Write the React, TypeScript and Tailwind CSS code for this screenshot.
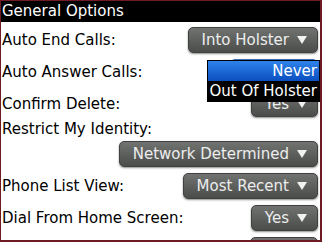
import React from 'react'

function Arrow() {
  return (
    <svg width="10" height="8" viewBox="0 0 10 8" className="shrink-0">
      <polygon points="0,0 10,0 5,8" fill="#f2f2f2" />
    </svg>
  )
}

function Picker({ label, focused = false }: { label: string; focused?: boolean }) {
  const tone = focused
    ? 'from-[#8cbcf0] to-[#2a6cd0] border-[#3a6fb8]'
    : 'from-[#717371] to-[#4b4d4b] border-[#3f413f]'
  return (
    <div
      className={`flex items-center gap-[8px] h-[26px] rounded-[5px] border bg-gradient-to-b ${tone} pl-[13px] pr-[10px] text-[#ededed] shadow-[0_1px_2px_rgba(0,0,0,0.45)] whitespace-nowrap`}
    >
      <span className="leading-none">{label}</span>
      <Arrow />
    </div>
  )
}

function Row({ label, value, focused }: { label?: string; value: string; focused?: boolean }) {
  return (
    <div className="flex items-center justify-between h-[32px] pl-[1px] pr-[2px]">
      <span className="whitespace-nowrap">{label}</span>
      <Picker label={value} focused={focused} />
    </div>
  )
}

export default function App() {
  return (
    <div className="relative w-[322px] h-[242px] overflow-hidden bg-white border-[#6e1b23] border-l border-t border-r-2 border-b-2 font-['DejaVu_Sans',sans-serif] text-[15px] text-black">
      <div className="h-[21px] bg-black text-white pl-[1px] leading-[21px]">General Options</div>
      <div className="pt-[2px]">
        <Row label="Auto End Calls:" value="Into Holster" />
        <Row label="Auto Answer Calls:" value="Never" focused />
        <Row label="Confirm Delete:" value="Yes" />
        <div className="h-[18px] flex items-center pl-[1px]">Restrict My Identity:</div>
        <Row value="Network Determined" />
        <Row label="Phone List View:" value="Most Recent" />
        <Row label="Dial From Home Screen:" value="Yes" />
        {/* next row, scrolled mostly out of view */}
        <div className="flex justify-end h-[32px] pt-[3px] pr-[2px]">
          <div className="w-[68px] h-[26px] rounded-[5px] border border-[#3f413f] bg-gradient-to-b from-[#717371] to-[#4b4d4b]" />
        </div>
      </div>

      {/* open picker list */}
      <div className="absolute right-0 top-[59px] w-[113px] border border-black bg-black text-white text-right">
        <div className="h-[20px] leading-[20px] pr-[2px] bg-gradient-to-b from-[#2f82ea] to-[#0b4fc0]">Never</div>
        <div className="h-[20px] leading-[20px] pr-[2px]">Out Of Holster</div>
      </div>
    </div>
  )
}
